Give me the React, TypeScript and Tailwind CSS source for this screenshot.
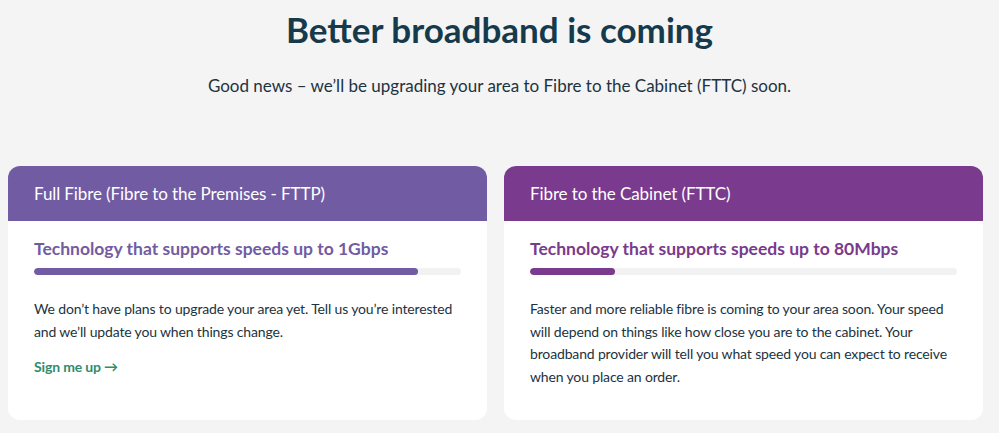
import React from 'react';

interface PlanCardProps {
  title: string;
  speed: string;
  percent: number;
  headerClass: string;
  textClass: string;
  barClass: string;
  children: React.ReactNode;
}

const PlanCard: React.FC<PlanCardProps> = ({ title, speed, percent, headerClass, textClass, barClass, children }) => {
  return (
    <div className="bg-white rounded-[12px] overflow-hidden flex flex-col">
      <div className={`${headerClass} h-[55px] flex items-center px-[26px]`}>
        <h2 className="text-white text-[17px] tracking-[-0.1px] leading-none">{title}</h2>
      </div>
      <div className="px-[26px] pt-[15px] pb-[32px]">
        <h3 className={`${textClass} text-[17.5px] font-bold leading-[26px]`}>{speed}</h3>
        <div className="mt-[6px] h-[7px] rounded-full bg-[#f2f2f2] overflow-hidden">
          <div className={`${barClass} h-full rounded-full`} style={{ width: `${percent}%` }}></div>
        </div>
        <div className="mt-[23px] text-[14px] tracking-[-0.15px] leading-[22.5px] text-[#1c3341] whitespace-nowrap">{children}</div>
      </div>
    </div>
  );
};

export default function App() {
  return (
    <div className="min-h-[433px] bg-[#f4f4f4] font-['Lato',sans-serif] text-[#163a4c]">
      <div className="pt-[5px] text-center">
        <h1 className="text-[35px] font-bold leading-[48px] text-[#163a4c]">Better broadband is coming</h1>
        <p className="mt-[21px] text-[17px] leading-[24px] text-[#1c3341]">
          Good news – we’ll be upgrading your area to Fibre to the Cabinet (FTTC) soon.
        </p>
      </div>

      <div className="mt-[68px] ml-[8px] w-[975px] grid grid-cols-2 gap-[17px]">
        <PlanCard
          title="Full Fibre (Fibre to the Premises - FTTP)"
          speed="Technology that supports speeds up to 1Gbps"
          percent={90}
          headerClass="bg-[#715ca3]"
          textClass="text-[#715ca3]"
          barClass="bg-[#715ca3]"
        >
          <p>
            We don’t have plans to upgrade your area yet. Tell us you’re interested
            <br />
            and we’ll update you when things change.
          </p>
          <a href="#" className="mt-[13px] inline-block font-bold text-[#2f8c6c]">Sign me up →</a>
        </PlanCard>
        <PlanCard
          title="Fibre to the Cabinet (FTTC)"
          speed="Technology that supports speeds up to 80Mbps"
          percent={20}
          headerClass="bg-[#7a3a8d]"
          textClass="text-[#7a3a8d]"
          barClass="bg-[#7a3a8d]"
        >
          <p>
            Faster and more reliable fibre is coming to your area soon. Your speed
            <br />
            will depend on things like how close you are to the cabinet. Your
            <br />
            broadband provider will tell you what speed you can expect to receive
            <br />
            when you place an order.
          </p>
        </PlanCard>
      </div>
    </div>
  );
}
